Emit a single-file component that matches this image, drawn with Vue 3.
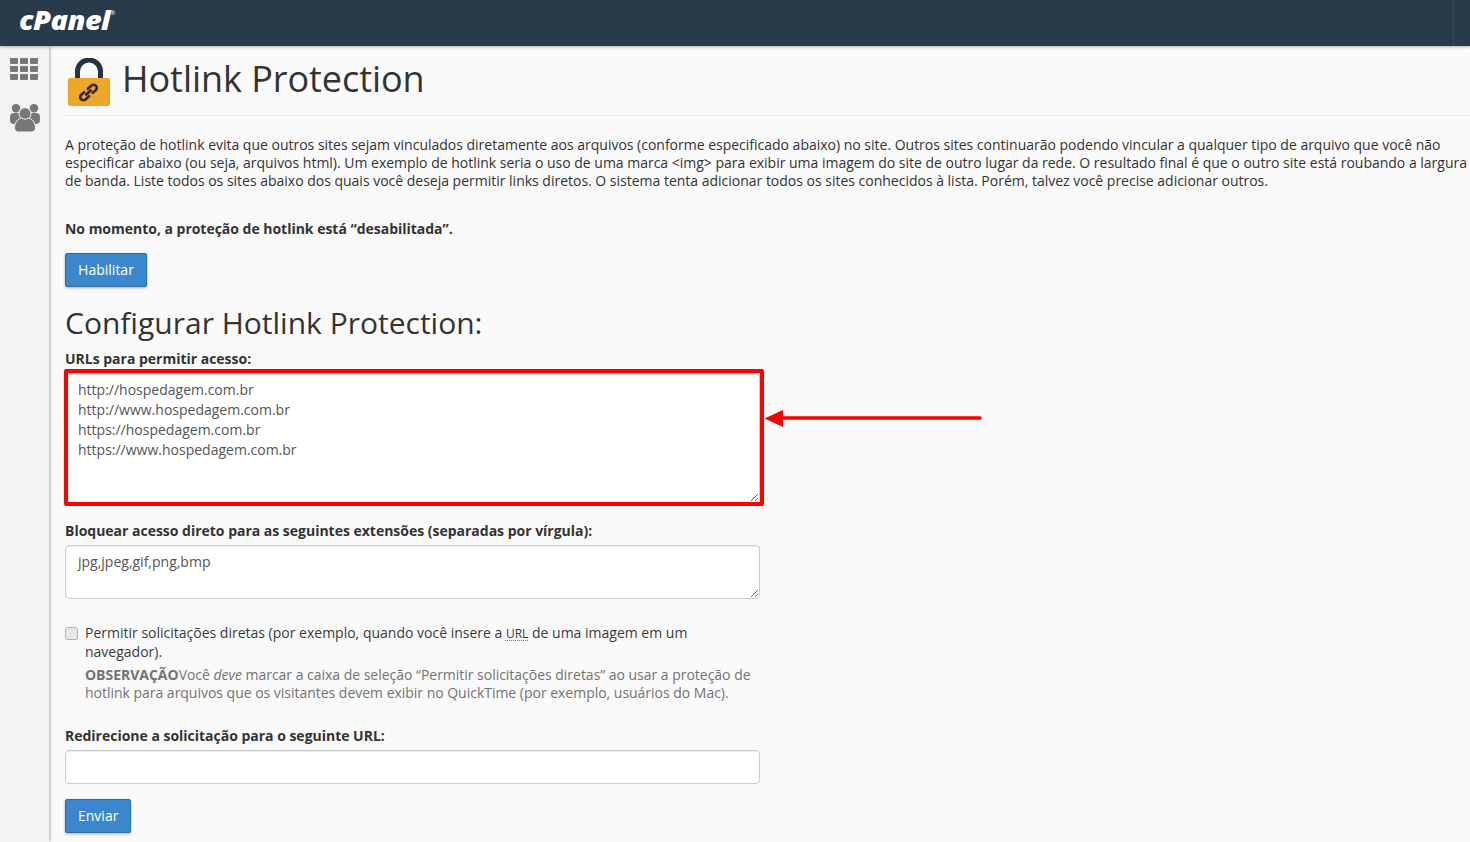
<script setup>
const urls = 'http://hospedagem.com.br\nhttp://www.hospedagem.com.br\nhttps://hospedagem.com.br\nhttps://www.hospedagem.com.br'
const exts = 'jpg,jpeg,gif,png,bmp'
</script>

<template>
  <div class="page">
    <header class="topbar">
      <span class="logo">cPanel<sup>®</sup></span>
      <span class="topbar-divider"></span>
    </header>
    <div class="body">
      <aside class="sidebar">
        <svg class="side-icon" width="28" height="22" viewBox="0 0 28 22" fill="#777">
          <rect x="0" y="0" width="8" height="6" rx="1"/><rect x="10" y="0" width="8" height="6" rx="1"/><rect x="20" y="0" width="8" height="6" rx="1"/>
          <rect x="0" y="8" width="8" height="6" rx="1"/><rect x="10" y="8" width="8" height="6" rx="1"/><rect x="20" y="8" width="8" height="6" rx="1"/>
          <rect x="0" y="16" width="8" height="6" rx="1"/><rect x="10" y="16" width="8" height="6" rx="1"/><rect x="20" y="16" width="8" height="6" rx="1"/>
        </svg>
        <svg class="side-icon users" width="30" height="28" viewBox="0 0 30 28" fill="#777">
          <circle cx="6" cy="4.200" r="4.200"/><circle cx="24" cy="4.200" r="4.200"/>
          <rect x="0" y="9" width="12" height="11" rx="4"/><rect x="18" y="9" width="12" height="11" rx="4"/>
          <circle cx="15" cy="9.700" r="6" stroke="#f4f4f4" stroke-width="1"/>
          <path d="M4.500 24c0-6 4-9.500 7-10 2 1.500 5 1.500 7 0 3 .5 7 4 7 10 0 2.500-2 4-4 4H8.500c-2 0-4-1.500-4-4z" stroke="#f4f4f4" stroke-width="1"/>
        </svg>
      </aside>
      <main class="main">
        <div class="title-row">
          <svg class="lock" width="42" height="48" viewBox="0 0 42 48">
            <path d="M9.500 24V13.500a11.500 11.500 0 0 1 23 0V24" fill="none" stroke="#243444" stroke-width="5"/>
            <rect x="0" y="20" width="42" height="28" rx="2" fill="#eea829"/>
            <g fill="none" stroke="#33291a" stroke-width="2.700" stroke-linecap="round" transform="rotate(-42 20.500 34.500)">
              <path d="M17.500 31.400H13.600a3.100 3.100 0 0 0 0 6.200H18.500"/>
              <path d="M23.500 37.600H27.400a3.100 3.100 0 0 0 0-6.200H22.500"/>
              <path d="M17.500 34.500H23.500"/>
            </g>
          </svg>
          <h1 class="title">Hotlink Protection</h1>
        </div>
        <p class="intro">A proteção de hotlink evita que outros sites sejam vinculados diretamente aos arquivos (conforme especificado abaixo) no site. Outros sites continuarão podendo vincular a qualquer tipo de arquivo que você não especificar abaixo (ou seja, arquivos html). Um exemplo de hotlink seria o uso de uma marca &lt;img&gt; para exibir uma imagem do site de outro lugar da rede. O resultado final é que o outro site está roubando a largura de banda. Liste todos os sites abaixo dos quais você deseja permitir links diretos. O sistema tenta adicionar todos os sites conhecidos à lista. Porém, talvez você precise adicionar outros.</p>
        <p class="status">No momento, a proteção de hotlink está “desabilitada”.</p>
        <button class="btn enable" type="button">Habilitar</button>
        <h2 class="subtitle">Configurar Hotlink Protection:</h2>
        <form class="form" @submit.prevent>
          <div class="field">
            <label class="label" for="urls">URLs para permitir acesso:</label>
            <div class="highlight-wrap">
              <textarea id="urls" class="control urls" :value="urls"></textarea>
              <span class="red-frame"></span>
              <svg class="arrow" width="220" height="20" viewBox="0 0 220 20">
                <path d="M19 10H216" stroke="#f00" stroke-width="3.500" stroke-linecap="round"/>
                <path d="M0.500 10.500L19 2v17z" fill="#f00"/>
              </svg>
            </div>
          </div>
          <div class="field ext">
            <label class="label" for="exts">Bloquear acesso direto para as seguintes extensões (separadas por vírgula):</label>
            <textarea id="exts" class="control exts" :value="exts"></textarea>
          </div>
          <div class="check-row">
            <input id="direct" class="check" type="checkbox" />
            <div class="check-text">
              <label class="check-label" for="direct">Permitir solicitações diretas (por exemplo, quando você insere a <abbr class="abbr">URL</abbr> de uma imagem em um navegador).</label>
              <p class="note"><strong>OBSERVAÇÃO</strong>Você <em>deve</em> marcar a caixa de seleção “Permitir solicitações diretas” ao usar a proteção de hotlink para arquivos que os visitantes devem exibir no QuickTime (por exemplo, usuários do Mac).</p>
            </div>
          </div>
          <div class="field redirect">
            <label class="label" for="redir">Redirecione a solicitação para o seguinte URL:</label>
            <input id="redir" class="control single" type="text" />
          </div>
          <button class="btn submit" type="submit">Enviar</button>
        </form>
      </main>
    </div>
  </div>
</template>

<style>
html, body { margin: 0; height: 100%; overflow: hidden; background: #fafafa; }
</style>

<style scoped>
* { box-sizing: border-box; }
.page {
  width: 1470px; height: 842px; overflow: hidden; background: #fafafa;
  font-family: "Open Sans", sans-serif; font-size: 14px; line-height: 20px; color: #333;
}
.topbar {
  height: 46px; background: #293a4a; display: flex; align-items: center; position: relative;
  box-shadow: 0 1px 3px rgba(0,0,0,.3); z-index: 2; padding-left: 19px;
}
.logo {
  font-family: "Open Sans", sans-serif; font-weight: 800; font-style: italic; font-size: 27px;
  color: #fff; line-height: 30px; letter-spacing: -0.5px; margin-top: -6px;
  transform: scaleX(1.07); transform-origin: left center;
}
.logo sup { font-size: 6px; font-weight: 400; vertical-align: 15px; line-height: 0; letter-spacing: 0; }
.topbar-divider { position: absolute; right: 16px; top: 0; height: 46px; width: 1px; background: #33475a; }
.body { display: flex; height: 796px; }
.sidebar {
  width: 49px; flex: none; background: #f4f4f4; display: flex; flex-direction: column; align-items: flex-start;
  box-shadow: 1px 0 3px rgba(0,0,0,.3); padding: 12px 0 0 10px; gap: 24px;
}
.main { flex: 1; min-width: 0; padding-left: 16px; }
.title-row {
  height: 70px; border-bottom: 1px solid #eaeaea; display: flex; align-items: flex-start; padding-top: 12px; padding-left: 3px;
  gap: 13px;
}
.lock { flex: none; }
.title { margin: -1px 0 0 -1px; font-size: 36px; line-height: 44px; font-weight: 400; color: #333; white-space: nowrap; letter-spacing: -0.05px; }
.intro { margin: 20px 0 0; line-height: 18px; color: #333; width: 1410px; letter-spacing: -0.008px; }
.status { margin: 30px 0 0; font-weight: 700; line-height: 18px; letter-spacing: -0.018px; }
.btn {
  display: block; height: 34px; padding: 6px 12px; border: 1px solid #2e6da4; border-radius: 2px;
  background: #3a87cd; color: #fff; font: 14px/20px "Open Sans", sans-serif;
  box-shadow: 0 1px 3px rgba(0,0,0,.3);
}
.enable { margin-top: 15px; width: 82px; }
.subtitle { margin: 18px 0 0; font-size: 30px; line-height: 36px; font-weight: 400; color: #333; }
.form { width: 695px; margin-top: 8px; }
.label { display: block; font-weight: 700; line-height: 20px; margin-bottom: 4px; letter-spacing: -0.012px; }
.control {
  display: block; width: 100%; background: #fff; border: 1px solid #ccc; border-radius: 4px; padding: 6px 12px;
  font: 14px/20px "Open Sans", sans-serif; color: #555; box-shadow: inset 0 1px 1px rgba(0,0,0,.075); outline: none;
}
.highlight-wrap { position: relative; }
.urls { height: 130px; }
.exts { height: 54px; }
.single { height: 34px; }
.red-frame {
  position: absolute; left: -1px; top: -4px; width: 700px; height: 137px;
  border: 4px solid #f00; border-radius: 2px; pointer-events: none;
}
.arrow { position: absolute; left: 699px; top: 35px; }
.ext { margin-top: 18px; }
.check-row { display: flex; margin-top: 24px; }
.check {
  appearance: none; margin: 4px 7px 0 0; width: 13px; height: 13px; flex: none;
  background: #e8e8e8; border: 1px solid #b0b0b0; border-radius: 3px;
}
.check-label { display: block; line-height: 19px; color: #3a3a3a; }
.abbr { font-size: 12px; line-height: 1; text-decoration: underline dotted #777; text-underline-offset: 2px; }
.note { margin: 5px 0 0; line-height: 18px; color: #737373; letter-spacing: -0.02px; }
.note strong { font-weight: 700; }
.redirect { margin-top: 24px; }
.submit { margin-top: 15px; width: 66px; }
</style>
